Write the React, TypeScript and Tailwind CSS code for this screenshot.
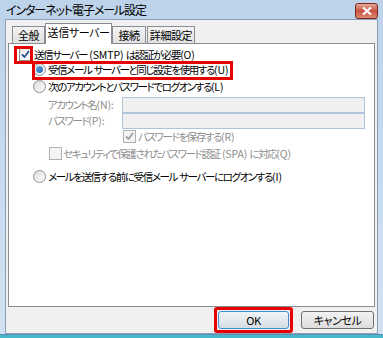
import React from "react";

const font = { fontFamily: '"Noto Sans CJK JP", "Noto Sans", sans-serif' };

// ASCII runs keep normal spacing, kana/kanji are squeezed tighter
function T({ children }: { children: string }) {
  const parts = children.split(/([\x20-\x7e]+)/).filter(Boolean);
  return (
    <span>
      {parts.map((p, i) =>
        /^[\x20-\x7e]+$/.test(p) ? (
          <span key={i} className="whitespace-pre tracking-[-0.1px]">
            {p}
          </span>
        ) : (
          <span key={i}>{p}</span>
        )
      )}
    </span>
  );
}

function CheckBox({ checked, disabled }: { checked?: boolean; disabled?: boolean }) {
  return (
    <span
      className={`flex h-[13px] w-[13px] shrink-0 items-center justify-center border ${
        disabled ? "border-[#b1b1b1] bg-[#f4f4f4]" : "border-[#8e8f8f] bg-gradient-to-br from-[#e6e6e6] to-white"
      }`}
    >
      {checked ? (
        <svg width="9" height="9" viewBox="0 0 9 9">
          <path
            d="M1 4.5 L3.5 7 L8 1"
            fill="none"
            stroke={disabled ? "#a0a0a0" : "#2a4e8f"}
            strokeWidth="1.8"
          />
        </svg>
      ) : null}
    </span>
  );
}

function Radio({ checked }: { checked?: boolean }) {
  return (
    <span className="flex h-[13px] w-[13px] shrink-0 items-center justify-center rounded-full border border-[#8e8f8f] bg-gradient-to-br from-[#dcdcdc] to-white">
      {checked ? (
        <span className="h-[7px] w-[7px] rounded-full bg-gradient-to-br from-[#6ab0e6] to-[#1b5fa8]" />
      ) : null}
    </span>
  );
}

function Tab({ label, active, w }: { label: string; active?: boolean; w: string }) {
  if (active) {
    return (
      <div
        className={`relative z-10 -mb-px flex h-[21px] ${w} items-start justify-center whitespace-nowrap border border-b-0 border-[#898c95] bg-white pt-[3px]`}
      >
        {label}
      </div>
    );
  }
  return (
    <div
      className={`mt-[3px] flex h-[17px] ${w} items-center justify-center whitespace-nowrap border border-b-0 border-[#898c95] bg-gradient-to-b from-[#f3f3f3] to-[#e1e1e1]`}
    >
      {label}
    </div>
  );
}

export default function App() {
  return (
    <div
      className="flex h-[338px] w-[383px] flex-col bg-gradient-to-b from-[#bdd3ea] to-[#d2e2f2] text-[11px] leading-none tracking-[-0.4px] text-black [font-feature-settings:'palt']"
      style={font}
    >
      {/* title bar */}
      <div className="flex h-[21px] items-center justify-between pl-[6px] pr-[5px]">
        <span className="whitespace-nowrap text-[12px] tracking-[-1.1px]">インターネット電子メール設定</span>
        <span className="mt-[2px] flex h-[16px] w-[23px] items-center justify-center rounded-[3px] border border-[#7a2a22] bg-gradient-to-b from-[#e3a89a] via-[#c8503e] to-[#d98a72]">
          <svg width="10" height="8" viewBox="0 0 10 8">
            <path d="M1 0.5 L9 7.5 M9 0.5 L1 7.5" stroke="white" strokeWidth="2.2" />
          </svg>
        </span>
      </div>

      {/* client area */}
      <div className="mx-[5px] flex flex-1 flex-col border border-[#8aa0b8] bg-[#f0f0f0] px-[2px] pt-[2px]">
        {/* tabs */}
        <div className="flex pl-[4px] pt-[1px]">
          <Tab label="全般" w="w-[33px]" />
          <Tab label="送信サーバー" w="w-[67px]" active />
          <Tab label="接続" w="w-[34px]" />
          <div className="w-px" />
          <Tab label="詳細設定" w="w-[48px]" />
        </div>

        {/* panel */}
        <div className="relative flex h-[264px] flex-col whitespace-nowrap border border-[#898c95] bg-white pt-[3px] text-[10.5px] tracking-[-1.4px]">
          <div className="flex h-[15px] items-center gap-[2px] pl-[10px]">
            <CheckBox checked />
            <T>送信サーバー (SMTP) は認証が必要(O)</T>
          </div>
          <div className="flex h-[15px] items-center gap-[2px] pl-[24px]">
            <Radio checked />
            <T>受信メール サーバーと同じ設定を使用する(U)</T>
          </div>
          <div className="mt-[2px] flex h-[15px] items-center gap-[2px] pl-[24px]">
            <Radio />
            <T>次のアカウントとパスワードでログオンする(L)</T>
          </div>
          <div className="mt-[3px] flex h-[16px] items-center pl-[39px] text-[#8d8d8d]">
            <span className="w-[74px]">
              <T>アカウント名(N):</T>
            </span>
            <span className="h-[16px] w-[243px] border border-[#afc4dc] bg-[#f0f0f0]" />
          </div>
          <div className="flex h-[16px] items-center pl-[39px] text-[#8d8d8d]">
            <span className="w-[74px]">
              <T>パスワード(P):</T>
            </span>
            <span className="h-[16px] w-[243px] border border-[#afc4dc] bg-[#f0f0f0]" />
          </div>
          <div className="flex h-[15px] items-center gap-[2px] pl-[114px] text-[#8d8d8d]">
            <CheckBox checked disabled />
            <T>パスワードを保存する(R)</T>
          </div>
          <div className="mt-[2px] flex h-[15px] items-center gap-[1px] pl-[40px] text-[#8d8d8d]">
            <CheckBox disabled />
            <T>セキュリティで保護されたパスワード認証 (SPA) に対応(Q)</T>
          </div>
          <div className="mt-[8px] flex h-[15px] items-center gap-[2px] pl-[24px]">
            <Radio />
            <T>メールを送信する前に受信メール サーバーにログオンする(I)</T>
          </div>

          {/* highlight boxes */}
          <div className="absolute left-[5px] top-[2px] h-[18px] w-[19px] border-[3px] border-[#e60000]" />
          <div className="absolute left-[23px] top-[17px] h-[19px] w-[201px] border-[3px] border-[#e60000]" />
        </div>

        {/* buttons */}
        <div className="flex flex-1 items-center justify-end gap-[8px] pr-[1px]">
          <div className="rounded-[3px] border-[3px] border-[#e60000] p-[1px]">
            <button className="flex h-[18px] w-[71px] items-center justify-center rounded-[3px] border border-[#3c8fd0] bg-gradient-to-b from-[#f0f4f7] to-[#d6dde3]">
              OK
            </button>
          </div>
          <button className="flex h-[18px] w-[73px] items-center justify-center rounded-[3px] border border-[#707070] bg-gradient-to-b from-[#f2f2f2] to-[#dddddd]">
            キャンセル
          </button>
        </div>
      </div>
      <div className="h-[4px] border-t border-[#5d8fb7] bg-[#44b8c8]" />
    </div>
  );
}
